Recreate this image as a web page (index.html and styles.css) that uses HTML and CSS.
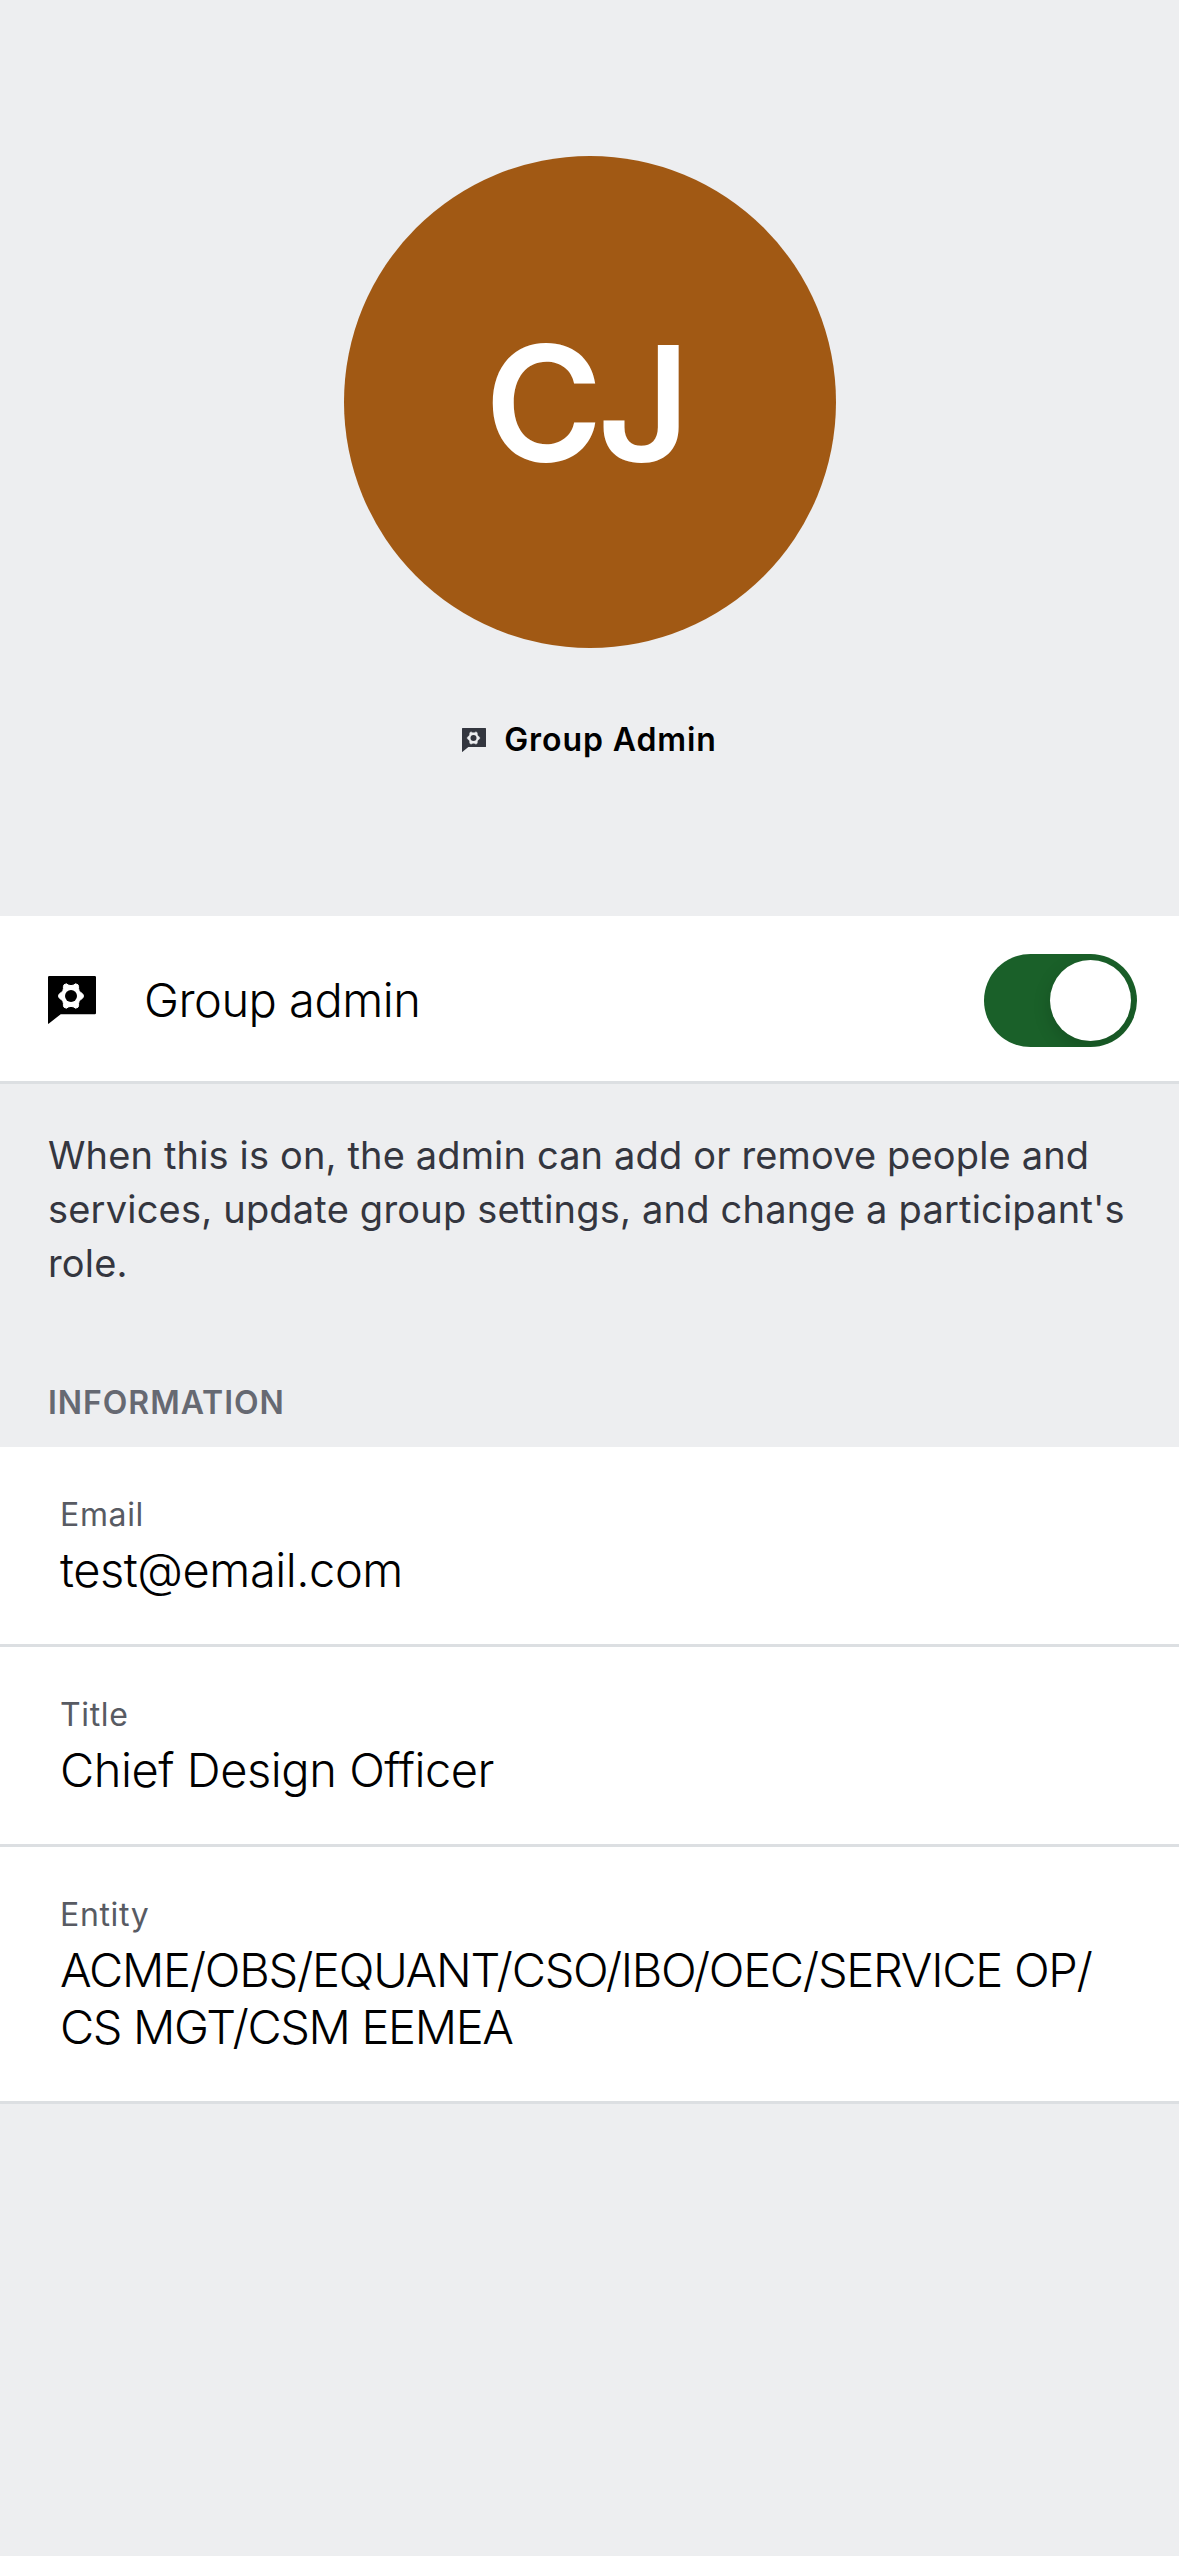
FILE: index.html
```html
<!DOCTYPE html>
<html lang="en">
<head>
<meta charset="utf-8">
<title>Participant details</title>
<link rel="stylesheet" href="styles.css">
</head>
<body>
<svg class="defs" width="0" height="0" aria-hidden="true">
  <symbol id="admin" viewBox="0 0 48 48">
    <path fill="currentColor" d="M1.2 0H46.8Q48 0 48 1.2V37Q48 38.2 46.8 38.2H12.7L.6 47.8Q0 48 0 47.2V1.2Q0 0 1.2 0Z"/>
    <path class="gear" transform="translate(23 20)" d="M12.3-1V1Q11.6 2.6 9.8 3.4Q7.6 5 7.6 7.4Q7.9 9.6 7 11.2L4.6 12.2Q2.6 10.4 0 10.4Q-2.6 10.4-4.6 12.2L-7 11.2Q-7.9 9.6-7.6 7.4Q-7.6 5-9.8 3.4Q-11.6 2.6-12.3 1V-1Q-11.6-2.6-9.8-3.4Q-7.6-5-7.6-7.4Q-7.9-9.6-7-11.2L-4.6-12.2Q-2.6-10.4 0-10.4Q2.6-10.4 4.6-12.2L7-11.2Q7.9-9.6 7.6-7.4Q7.6-5 9.8-3.4Q11.6-2.6 12.3-1Z"/>
    <circle cx="23" cy="20" r="6" fill="currentColor"/>
  </symbol>
</svg>
<main class="screen">
  <header class="profile">
    <div class="avatar"><span class="initials">CJ</span></div>
    <div class="role">
      <svg class="role-icon"><use href="#admin"/></svg>
      <span class="role-name">Group Admin</span>
    </div>
  </header>
  <section class="setting">
    <svg class="setting-icon"><use href="#admin"/></svg>
    <span class="setting-label">Group admin</span>
    <span class="toggle" role="switch" aria-checked="true"><span class="knob"></span></span>
  </section>
  <p class="hint"><span class="hint-first">When this is on, the admin can add or remove people and</span><br><span class="hint-rest">services, update group settings, and change a participant's<br>role.</span></p>
  <h2 class="heading">INFORMATION</h2>
  <dl class="info">
    <div class="item"><dt>Email</dt><dd>test@email.com</dd></div>
    <div class="item"><dt>Title</dt><dd>Chief Design Officer</dd></div>
    <div class="item"><dt>Entity</dt><dd class="entity"><span class="path">ACME/OBS/EQUANT/CSO/IBO/OEC/SERVICE OP/</span><br>CS MGT/CSM EEMEA</dd></div>
  </dl>
</main>
</body>
</html>
```

FILE: styles.css
```css
* { box-sizing: border-box; margin: 0; padding: 0; }
body {
  background: #edeef0;
  color: #000;
  font-family: Inter, "Liberation Sans", sans-serif;
}
.defs { display: block; position: absolute; }
.gear {
  fill: var(--cutout);
  stroke: var(--cutout);
  stroke-width: 1;
  stroke-linejoin: round;
}
.screen { width: 1179px; height: 2556px; overflow: hidden; }
.profile {
  --cutout: #edeef0;
  height: 916px;
  padding-top: 156px;
  display: flex;
  flex-direction: column;
  align-items: center;
}
.avatar {
  width: 492px;
  height: 492px;
  border-radius: 50%;
  background: #a15914;
  color: #fff;
  display: flex;
  align-items: center;
  justify-content: center;
  margin-left: 1px;
}
.initials {
  margin-right: 10px;
  padding-top: 2px;
  font-size: 160px;
  font-weight: 600;
  line-height: 200px;
  letter-spacing: -5px;
}
.role {
  margin-top: 72px;
  display: flex;
  align-items: center;
  gap: 18px;
  height: 40px;
}
.role-icon { width: 24px; height: 24px; color: #33363f; }
.role-name {
  font-size: 32px;
  font-weight: 600;
  line-height: 40px;
  letter-spacing: .9px;
  white-space: nowrap;
}
.setting {
  --cutout: #fff;
  height: 168px;
  background: #fff;
  border-bottom: 3px solid #dcdfe2;
  display: flex;
  align-items: center;
  padding: 3px 42px 0 48px;
}
.setting-icon { width: 48px; height: 48px; }
.setting-label {
  margin-left: 48px;
  flex: 1;
  font-size: 47px;
  font-weight: 300;
  line-height: 60px;
  letter-spacing: -.5px;
}
.toggle {
  width: 153px;
  height: 93px;
  border-radius: 47px;
  background: #1a6029;
  padding: 6px;
  display: flex;
  justify-content: flex-end;
  overflow: hidden;
}
.knob {
  width: 81px;
  height: 81px;
  border-radius: 50%;
  background: #fff;
  box-shadow: 0 6px 18px rgba(0, 0, 0, .16);
}
.hint {
  height: 288px;
  padding: 44px 0 0 48px;
  font-size: 38px;
  line-height: 54px;
  color: #34363f;
  white-space: nowrap;
}
.hint-first { letter-spacing: .15px; }
.hint-rest { letter-spacing: .2px; }
.heading {
  height: 75px;
  padding: 11px 0 0 48px;
  font-size: 32px;
  font-weight: 600;
  line-height: 40px;
  letter-spacing: .95px;
  color: #666972;
}
.info { background: #fff; }
.item { padding: 48px 0 46px 60px; border-bottom: 3px solid #dcdfe2; }
.item dt { font-size: 32px; line-height: 40px; letter-spacing: .65px; color: #585b63; }
.item dd {
  margin-top: 6px;
  font-size: 47px;
  font-weight: 300;
  line-height: 57px;
  letter-spacing: -.45px;
  white-space: nowrap;
}
.item .entity { letter-spacing: -1.35px; }
.path { letter-spacing: -1.26px; }
```
